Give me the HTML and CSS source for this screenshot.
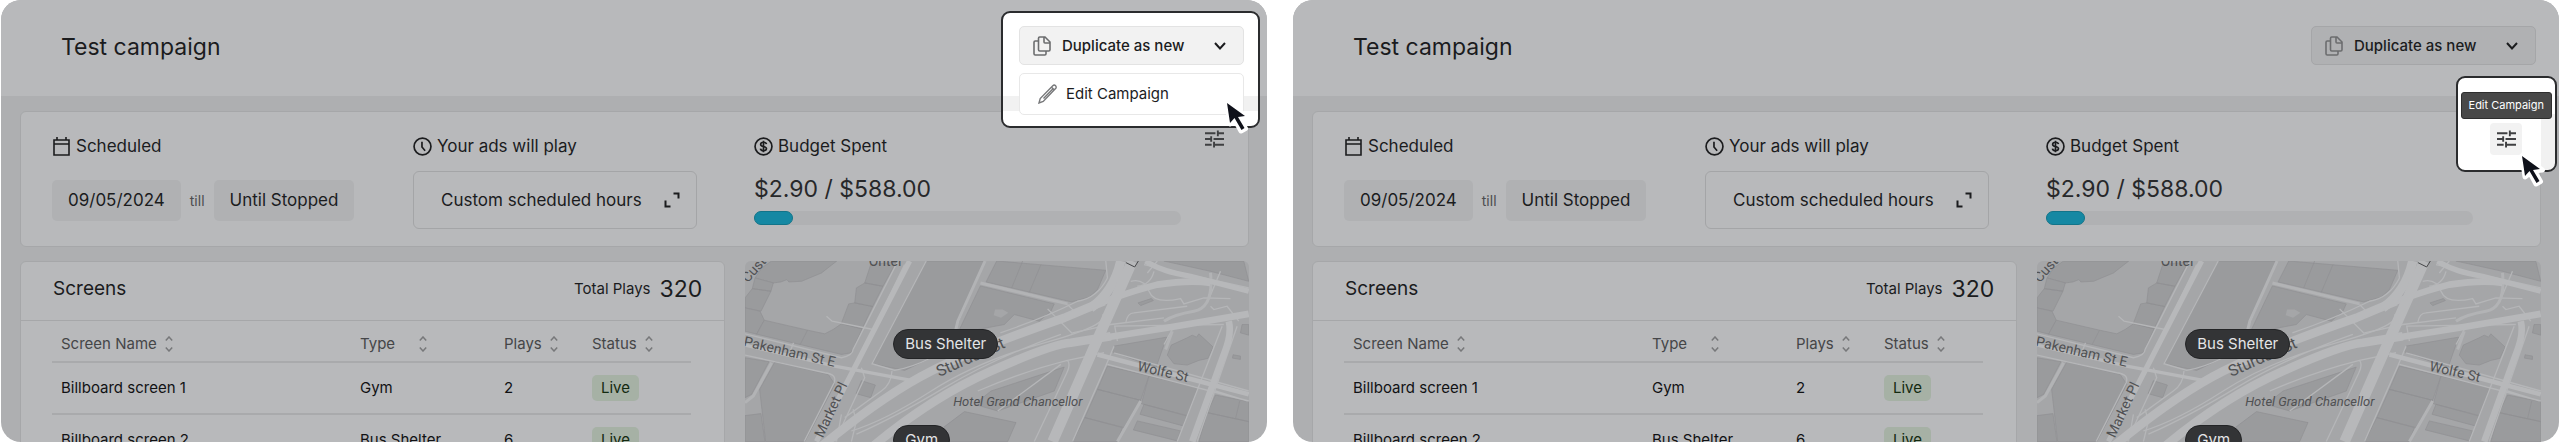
FILE: index.html
```
<!DOCTYPE html>
<html lang="en">
<head>
    <meta charset="UTF-8">
    <meta name="viewport" content="width=device-width, initial-scale=1.0">
    <title>Test campaign</title>
    <link rel="stylesheet" href="styles.css">
</head>

<body>
    <!-- shared icons -->
    <svg class="sprite" aria-hidden="true">
        <symbol id="i-copy" viewBox="0 0 18 20">
            <path d="M5.5 2.2c0-.7.5-1.2 1.2-1.2H12l5 5v7.800c0 .7-.5 1.200-1.200 1.200H6.700c-.7 0-1.200-.5-1.200-1.200zM11 1.200V6c0 .6.4 1 1 1h4.800M5.500 5H2.200C1.500 5 1 5.500 1 6.200v11.600c0 .7.5 1.200 1.200 1.200h9.600c.7 0 1.200-.5 1.200-1.200V15" />
        </symbol>
        <symbol id="i-chevron" viewBox="0 0 12 8">
            <path d="M1 1l5 5.500L11 1" />
        </symbol>
        <symbol id="i-pencil" viewBox="0 0 20 20">
            <path d="M1 19l1.200-4.500L14.800 1.800c.8-.8 2-.8 2.800 0s.8 2 0 2.800L5.200 17.400zM13.600 3.200l2.800 2.800M15 4.800l-9.500 9.700" />
        </symbol>
        <symbol id="i-calendar" viewBox="0 0 18 19">
            <path d="M1.500 3h15v15h-15zM1.500 7h15M4.500 0v3M13.500 0v3" />
        </symbol>
        <symbol id="i-clock" viewBox="0 0 18 18">
            <path d="M9 1a8 8 0 1 0 0 16A8 8 0 0 0 9 1zM8.500 4.500v5l3 3.500" />
        </symbol>
        <symbol id="i-dollar" viewBox="0 0 18 18">
            <path d="M9 1a8 8 0 1 0 0 16A8 8 0 0 0 9 1zM9 3.500v11M11.800 6.800C11.600 5.600 10.500 5 9 5S6.300 5.700 6.300 7c0 2.800 5.500 1.200 5.500 4 0 1.300-1.200 2-2.800 2s-2.700-.7-2.900-2" />
        </symbol>
        <symbol id="i-expand" viewBox="0 0 16 16">
            <path d="M9.500 1.500h5v5M1.500 8.500v6h5" />
        </symbol>
        <symbol id="i-tune" viewBox="0 0 20 18">
            <path d="M0 3h11M13.500 0v6M13.500 3H20M0 9h6M6.500 6v6M9 9h11M0 15h7M9.500 12v6M9.500 15H20" />
        </symbol>
        <symbol id="i-sort" viewBox="0 0 8 16">
            <path d="M.8 4.500L4 1l3.200 3.500M.8 11.500L4 15l3.200-3.500" />
        </symbol>
        <symbol id="i-cursor" viewBox="0 0 28 36">
            <path d="M4 4l3 21 5-4 6 11 4.500-2.500-6-10.500 8-1z" fill="#fff" stroke="#fff" stroke-width="5" stroke-linejoin="round" />
            <path d="M4 4l3 20 4.500-5 7 12 3-2-6.500-11 7-1z" fill="#0f111a" />
        </symbol>
    </svg>

    <main class="shots">
        <!-- header menu -->
        <section class="panel">
            <header class="header">
                <h1>Test campaign</h1>
                <div class="actions open">
                    <div class="spotlight"></div>
                    <button class="btn-duplicate" type="button">
                        <svg class="ico-copy"><use href="#i-copy" /></svg>
                        <span>Duplicate as new</span>
                        <svg class="ico-chevron"><use href="#i-chevron" /></svg>
                    </button>
                    <button class="menu-item" type="button">
                        <svg class="ico-pencil"><use href="#i-pencil" /></svg>
                        <span>Edit Campaign</span>
                    </button>
                    <svg class="cursor"><use href="#i-cursor" /></svg>
                </div>
            </header>

            <div class="content">
                <div class="card summary">
                    <div class="block">
                        <h2><svg class="ico"><use href="#i-calendar" /></svg>Scheduled</h2>
                        <div class="dates">
                            <span class="chip">09/05/2024</span>
                            <span class="till">till</span>
                            <span class="chip">Until Stopped</span>
                        </div>
                    </div>
                    <div class="block">
                        <h2><svg class="ico"><use href="#i-clock" /></svg>Your ads will play</h2>
                        <button class="btn-hours" type="button">
                            <span>Custom scheduled hours</span>
                            <svg class="ico-expand"><use href="#i-expand" /></svg>
                        </button>
                    </div>
                    <div class="block budget">
                        <h2><svg class="ico"><use href="#i-dollar" /></svg>Budget Spent</h2>
                        <p class="amount">$2.90 / $588.00</p>
                        <div class="bar"><div class="bar-fill"></div></div>
                    </div>
                    <div class="tune">
                        <button class="btn-tune" type="button" aria-label="Edit campaign">
                            <svg class="ico-tune"><use href="#i-tune" /></svg>
                        </button>
                    </div>
                </div>

                <div class="lower">
                    <div class="card screens">
                        <div class="screens-head">
                            <h2>Screens</h2>
                            <div class="total">Total Plays <strong>320</strong></div>
                        </div>
                        <table>
                            <thead>
                                <tr>
                                    <th class="col-name"><button class="sort" type="button"><span>Screen Name</span><svg><use href="#i-sort" /></svg></button></th>
                                    <th class="col-type"><button class="sort" type="button"><span>Type</span><svg><use href="#i-sort" /></svg></button></th>
                                    <th class="col-plays"><button class="sort" type="button"><span>Plays</span><svg><use href="#i-sort" /></svg></button></th>
                                    <th><button class="sort" type="button"><span>Status</span><svg><use href="#i-sort" /></svg></button></th>
                                </tr>
                            </thead>
                            <tbody>
                                <tr>
                                    <td>Billboard screen 1</td>
                                    <td>Gym</td>
                                    <td>2</td>
                                    <td><span class="live">Live</span></td>
                                </tr>
                                <tr>
                                    <td>Billboard screen 2</td>
                                    <td>Bus Shelter</td>
                                    <td>6</td>
                                    <td><span class="live">Live</span></td>
                                </tr>
                            </tbody>
                        </table>
                    </div>

                    <div class="map">
                        <svg class="streets" viewBox="0 9 1515 543">
                            <g id="street-map">
                                <g class="lot">
                                    <path d="M80 9H276L230 45 170 70 132 72 126 65 108 72 85 75 30 60 50 30z" />
                                    <path d="M30 60L85 75 78 100 22 92zM22 92L78 100 48 160 0 150V120z" />
                                    <path d="M0 150L45 160 58 187 35 229 0 220z" />
                                    <path d="M58 187L188 217 240 228 265 215 290 198 352 213 320 285 290 290 165 260 35 229zM188 217L166 260" />
                                    <path d="M378 20L455 12 415 85 360 75zM360 75L415 85 384 146 330 135 335 90zM330 135L384 146 352 213 290 196 312 138z" />
                                    <path d="M545 9H722L632 215 560 300 480 338 382 318z" />
                                    <path d="M757 9L1085 37 1060 95 1035 118 982 132 725 72zM835 9L802 90M890 20L855 103" />
                                    <path d="M708 84L930 138 920 160 885 190 810 170 780 200 700 215H645z" />
                                    <path d="M90 312L250 350 270 380 180 552H62L44 395zM0 300L72 312 20 410 0 420zM0 474L48 468 60 552H0z" />
                                    <path d="M350 369L392 382 378 420 334 408z" />
                                    <path d="M660 462L815 495 790 552H540z" />
                                    <path d="M960 328L930 400 760 460 690 440 740 400z" />
                                    <path d="M1268 238L1236 330 1105 282 1110 265zM1330 240L1345 232 1358 238 1365 228 1408 268 1392 302 1365 308 1330 322 1290 318 1270 292 1282 262z" />
                                    <path d="M1090 325L1215 355 1190 428 1060 395zM1060 395L1190 428 1140 510 1022 480zM1022 480L1135 510 1120 552H985z" />
                                    <path d="M1215 355L1362 390 1330 474 1192 438zM1200 440L1328 475 1318 505 1188 470zM1180 490L1310 520 1300 550 1168 517z" />
                                    <path d="M1415 412L1515 432V492L1390 465zM1390 465L1515 492V552H1365zM1488 430L1475 484" />
                                    <path d="M1260 9H1500L1515 70 1400 40zM1495 200H1515V232L1490 225zM1182 135L1222 122 1228 128 1190 143zM1468 291L1490 295V305L1466 301z" />
                                </g>
                                <path class="land" d="M752 155L775 155 792 165 770 180 748 172z" />
                                <!-- side streets -->
                                <g class="lane">
                                    <path d="M245 175L262 190 385 215M460 9L325 275Q325 292 290 300L0 228M480 20L350 290M545 9L382 318 450 338Q500 330 560 300" />
                                    <path d="M0 292L240 345Q278 350 268 375L178 552M300 480L410 400Q440 380 442 340M290 470L275 552M325 455L335 490 320 552M350 330L360 360 270 552M146 255L132 290" />
                                    <path d="M320 520Q420 490 560 400T900 255T1075 170M335 530Q450 480 600 390T950 230" />
                                    <path d="M760 460L950 320M970 308Q980 320 968 345L870 552M700 400Q840 340 970 308L1080 285M768 225Q900 180 1000 130 1060 120 1090 60L1085 9" />
                                    <path d="M910 153L985 228M970 140L995 165M985 225L1100 200 1260 180M1085 325L985 552M1085 325L1110 265" />
                                    <path d="M1160 70Q1200 60 1215 100T1310 122L1320 138 1380 120 1460 122M1145 195Q1150 165 1170 165L1330 145M1230 40Q1220 80 1180 85M1260 260L1285 215" />
                                    <path d="M1400 145L1410 155 1450 145 1485 190M1430 40L1390 135M1120 250L1112 205 1440 200M1435 205L1300 552M1480 205L1360 552M1415 400L1510 430M1200 20L1515 90M1210 45L1240 9M1090 320L1515 430M1110 285L1515 400" />
                                </g>
                                <g class="street">
                                    <path d="M80 315L25 415 0 435M722 9L640 190 628 240M708 75L970 138M1120 552L1190 430M1260 190Q1290 170 1350 160T1400 45" />
                                    <path d="M1265 275L1285 220" />
                                </g>
                                <!-- main roads -->
                                <g class="road">
                                    <path stroke-width="16" d="M495 9L345 300 215 552" />
                                    <path stroke-width="10" d="M0 262L270 325 500 368" />
                                    <path stroke-width="26" d="M225 570Q420 410 560 340T960 180Q1030 150 1080 130" />
                                    <path stroke-width="20" d="M960 180Q1120 110 1240 80 1340 65 1400 75" />
                                    <path stroke-width="26" d="M380 570Q560 420 740 340T980 255L1100 235" />
                                    <path stroke-width="20" d="M1080 240L1270 210 1515 168" />
                                    <path stroke-width="28" d="M1130 9Q1110 100 1040 150" />
                                    <path stroke-width="32" d="M1165 9L1060 245 925 552" />
                                    <path stroke-width="16" d="M1205 9Q1250 40 1340 55L1515 100" />
                                    <path stroke-width="14" d="M1060 290L1515 410" />
                                    <path stroke-width="20" d="M1455 190Q1465 230 1440 290L1345 552" />
                                </g>
                                <path class="mark" d="M1146 14L1172 27 1183 9" />
                                <g class="label">
                                    <text transform="translate(-6 264) rotate(13)">Pakenham St E</text>
                                    <text transform="translate(234 543) rotate(-65)">Market Pl</text>
                                    <text class="label-lg" transform="translate(584 358) rotate(-24)">Sturdee St</text>
                                    <text transform="translate(1178 338) rotate(13)">Wolfe St</text>
                                    <text transform="translate(8 76) rotate(-48)">Custom</text>
                                    <text x="372" y="25">Ohtel</text>
                                    <text class="label-hotel" x="626" y="446">Hotel Grand Chancellor</text>
                                </g>
                            </g>
                        </svg>
                        <button class="pin pin-shelter" type="button">Bus Shelter</button>
                        <button class="pin pin-gym" type="button">Gym</button>
                    </div>
                </div>
            </div>
        </section>

        <!-- card shortcut -->
        <section class="panel">
            <header class="header">
                <h1>Test campaign</h1>
                <div class="actions">
                    <button class="btn-duplicate" type="button">
                        <svg class="ico-copy"><use href="#i-copy" /></svg>
                        <span>Duplicate as new</span>
                        <svg class="ico-chevron"><use href="#i-chevron" /></svg>
                    </button>
                </div>
            </header>

            <div class="content">
                <div class="card summary">
                    <div class="block">
                        <h2><svg class="ico"><use href="#i-calendar" /></svg>Scheduled</h2>
                        <div class="dates">
                            <span class="chip">09/05/2024</span>
                            <span class="till">till</span>
                            <span class="chip">Until Stopped</span>
                        </div>
                    </div>
                    <div class="block">
                        <h2><svg class="ico"><use href="#i-clock" /></svg>Your ads will play</h2>
                        <button class="btn-hours" type="button">
                            <span>Custom scheduled hours</span>
                            <svg class="ico-expand"><use href="#i-expand" /></svg>
                        </button>
                    </div>
                    <div class="block budget">
                        <h2><svg class="ico"><use href="#i-dollar" /></svg>Budget Spent</h2>
                        <p class="amount">$2.90 / $588.00</p>
                        <div class="bar"><div class="bar-fill"></div></div>
                    </div>
                    <div class="tune open">
                        <div class="spotlight"></div>
                        <span class="tooltip">Edit Campaign</span>
                        <button class="btn-tune" type="button" aria-label="Edit campaign">
                            <svg class="ico-tune"><use href="#i-tune" /></svg>
                        </button>
                        <svg class="cursor"><use href="#i-cursor" /></svg>
                    </div>
                </div>

                <div class="lower">
                    <div class="card screens">
                        <div class="screens-head">
                            <h2>Screens</h2>
                            <div class="total">Total Plays <strong>320</strong></div>
                        </div>
                        <table>
                            <thead>
                                <tr>
                                    <th class="col-name"><button class="sort" type="button"><span>Screen Name</span><svg><use href="#i-sort" /></svg></button></th>
                                    <th class="col-type"><button class="sort" type="button"><span>Type</span><svg><use href="#i-sort" /></svg></button></th>
                                    <th class="col-plays"><button class="sort" type="button"><span>Plays</span><svg><use href="#i-sort" /></svg></button></th>
                                    <th><button class="sort" type="button"><span>Status</span><svg><use href="#i-sort" /></svg></button></th>
                                </tr>
                            </thead>
                            <tbody>
                                <tr>
                                    <td>Billboard screen 1</td>
                                    <td>Gym</td>
                                    <td>2</td>
                                    <td><span class="live">Live</span></td>
                                </tr>
                                <tr>
                                    <td>Billboard screen 2</td>
                                    <td>Bus Shelter</td>
                                    <td>6</td>
                                    <td><span class="live">Live</span></td>
                                </tr>
                            </tbody>
                        </table>
                    </div>

                    <div class="map">
                        <svg class="streets" viewBox="0 9 1515 543"><use href="#street-map" /></svg>
                        <button class="pin pin-shelter" type="button">Bus Shelter</button>
                        <button class="pin pin-gym" type="button">Gym</button>
                    </div>
                </div>
            </div>
        </section>
    </main>
</body>

</html>
```
FILE: styles.css
```
* {
    box-sizing: border-box;
}

body {
    margin: 0;
    background-color: #fff;
    color: #1b1c1e;
    font-family: Inter, "Liberation Sans", sans-serif;
    font-size: 15px;
    line-height: 20px;
}

h1,
h2,
p {
    margin: 0;
    font-weight: 400;
}

button {
    margin: 0;
    padding: 0;
    border: 0;
    background: none;
    color: inherit;
    font: inherit;
    cursor: pointer;
}

svg {
    display: block;
    flex: none;
    fill: none;
    stroke: currentColor;
    stroke-width: 2;
}

.sprite {
    position: absolute;
    width: 0;
    height: 0;
}

.shots {
    display: flex;
    gap: 26px;
    height: 100vh;
    padding: 0 1px;
}

.panel {
    flex: 1;
    min-width: 0;
    overflow: hidden;
    border-radius: 20px;
    background-color: #aeafb1;
}

/* header */
.header {
    display: flex;
    align-items: flex-start;
    justify-content: space-between;
    height: 96px;
    padding: 26px 23px 0 60px;
    background-color: #b8b9bb;
}

.header h1 {
    padding-top: 5px;
    font-size: 23px;
    line-height: 32px;
}

.actions {
    position: relative;
    width: 225px;
}

.actions .btn-duplicate {
    position: relative;
    z-index: 3;
}

.btn-duplicate {
    display: flex;
    align-items: center;
    width: 100%;
    height: 39px;
    padding: 0 17px 0 13px;
    border: 1px solid #a5a6a8;
    border-radius: 5px;
    background-color: #b0b1b3;
    font-weight: 500;
}

.btn-duplicate span {
    flex: 1;
    padding-left: 11px;
    text-align: left;
}

.open .btn-duplicate {
    border-color: #e3e3e3;
    background-color: #f2f2f2;
}

.menu-item {
    position: absolute;
    z-index: 3;
    top: 47px;
    left: 0;
    display: flex;
    align-items: center;
    gap: 8px;
    width: 100%;
    height: 42px;
    padding-left: 18px;
    border: 1px solid #e8e8e8;
    border-radius: 5px;
    background-color: #fff;
}

.ico-copy {
    width: 18px;
    height: 20px;
    color: #6c6d6f;
    stroke-width: 1.6;
}

.ico-pencil {
    width: 20px;
    height: 20px;
    color: #77787a;
    stroke-width: 1.4;
}

.ico-chevron {
    width: 12px;
    height: 8px;
}

.spotlight {
    position: absolute;
    z-index: 2;
    border: 2px solid #2b2c2e;
    border-radius: 9px;
    background-color: #fff;
}

.actions .spotlight {
    top: -15px;
    left: -18px;
    width: 259px;
    height: 117px;
    background-image: linear-gradient(#f1f1f1, #f1f1f1);
    background-position: 0 83px;
    background-repeat: no-repeat;
    background-size: 100% 15px;
}

.cursor {
    position: absolute;
    z-index: 4;
    width: 28px;
    height: 36px;
    stroke: none;
}

.actions .cursor {
    top: 73px;
    left: 204px;
}

/* campaign summary */
.content {
    padding: 15px 18px 0 19px;
}

.card {
    border: 1px solid #a6a7a9;
    border-radius: 6px;
    background-color: #b8b9bb;
}

.summary {
    position: relative;
    display: grid;
    grid-template-columns: 361px 341px 1fr auto;
    height: 136px;
    padding: 18px 16px 0 31px;
}

.block h2 {
    display: flex;
    align-items: center;
    gap: 5px;
    height: 32px;
    font-size: 17px;
}

.ico {
    width: 19px;
    height: 19px;
    stroke-width: 1.6;
}

.dates {
    display: flex;
    align-items: center;
    gap: 9px;
    margin-top: 18px;
}

.chip {
    padding: 10px 16px 11px;
    border-radius: 5px;
    background-color: #b0b1b3;
    font-size: 17px;
}

.till {
    color: #4c4d4f;
    font-size: 14px;
}

.btn-hours {
    display: flex;
    align-items: center;
    justify-content: space-between;
    width: 284px;
    height: 58px;
    margin-top: 9px;
    padding: 0 16px 0 27px;
    border: 1px solid #a4a5a7;
    border-radius: 6px;
    font-size: 17px;
}

.ico-expand {
    width: 16px;
    height: 16px;
}

.amount {
    margin-top: 11px;
    font-size: 23px;
    line-height: 32px;
    color: #27282a;
}

.bar {
    max-width: 427px;
    height: 14px;
    margin-top: 6px;
    border-radius: 7px;
    background-color: #b0b1b3;
}

.bar-fill {
    width: 39px;
    height: 14px;
    border: 1px solid #127489;
    border-radius: 7px;
    background-color: #1588a3;
}

.tune {
    position: relative;
    width: 34px;
}

.tune .btn-tune {
    position: relative;
    z-index: 3;
}

.btn-tune {
    display: flex;
    align-items: center;
    justify-content: center;
    width: 32px;
    height: 32px;
    margin-top: -7px;
    border-radius: 4px;
    color: #3f4042;
}

.open .btn-tune {
    background-color: #f2f2f2;
}

.ico-tune {
    width: 19px;
    height: 18px;
}

.tune .spotlight {
    top: -54px;
    right: -33px;
    width: 101px;
    height: 96px;
    background-image: linear-gradient(#f1f1f1, #f1f1f1);
    background-position: 100% 100%;
    background-repeat: no-repeat;
    background-size: 14px 56px;
}

.tooltip {
    position: absolute;
    z-index: 3;
    top: -38px;
    right: -28px;
    padding: 2px 7px 3px;
    border: 1px solid #2e2e2e;
    border-radius: 3px;
    background-color: #484848;
    color: #fff;
    font-size: 11px;
    white-space: nowrap;
}

.tune .cursor {
    top: 22px;
    left: 28px;
}

/* screens and map */
.lower {
    display: grid;
    grid-template-columns: 7fr 5fr;
    gap: 20px;
    margin-top: 14px;
}

.screens-head {
    display: flex;
    align-items: center;
    justify-content: space-between;
    height: 59px;
    padding: 0 22px 4px 32px;
    border-bottom: 1px solid #a6a7a9;
}

.screens-head h2 {
    font-size: 19px;
}

.total {
    display: flex;
    align-items: center;
    gap: 9px;
}

.total strong {
    font-size: 23px;
    font-weight: 400;
}

table {
    width: calc(100% - 64px);
    margin: 0 31px;
    border-collapse: collapse;
    table-layout: fixed;
}

th,
td {
    padding: 0 0 0 9px;
    border-bottom: 2px solid #a9aaac;
    text-align: left;
}

th {
    height: 41px;
    padding-top: 6px;
    color: #454648;
    font-weight: 400;
}

td {
    height: 52px;
    color: #111214;
}

.col-name {
    width: 299px;
}

.col-type {
    width: 144px;
}

.col-plays {
    width: 88px;
}

.sort {
    display: flex;
    align-items: center;
    gap: 8px;
}

.sort svg {
    width: 8px;
    height: 16px;
    color: #77787a;
    stroke-width: 1.5;
}

.col-type span {
    min-width: 51px;
    text-align: left;
}

.live {
    display: inline-block;
    padding: 3px 9px;
    border-radius: 5px;
    background-color: #a6b1a5;
    color: #132a10;
}

.map {
    position: relative;
    overflow: hidden;
    border-radius: 6px;
    background-color: #a5a6a8;
}

.streets {
    width: 100%;
    height: auto;
}

.lot {
    fill: #9a9b9d;
    stroke: #8f9092;
}

.land {
    fill: #a5a6a8;
    stroke: none;
}

.lane {
    stroke: #b5b6b8;
    stroke-width: 4;
}

.street {
    stroke: #b2b3b5;
    stroke-width: 9;
}

.road {
    stroke: #b7b8ba;
}

.mark {
    stroke: #444547;
    stroke-width: 3;
}

.label {
    fill: #505153;
    stroke: none;
    font-family: Roboto, "Liberation Sans", sans-serif;
    font-size: 42px;
}

.label-lg {
    font-size: 48px;
}

.label-hotel {
    font-size: 39px;
    font-style: italic;
}

.pin {
    position: absolute;
    border: 1px solid #232426;
    border-radius: 15px;
    background-color: #333436;
    color: #e4e5e7;
}

.pin-shelter {
    top: 68px;
    left: 148px;
    width: 105px;
    height: 30px;
}

.pin-gym {
    top: 164px;
    left: 148px;
    width: 57px;
    height: 30px;
}
```
